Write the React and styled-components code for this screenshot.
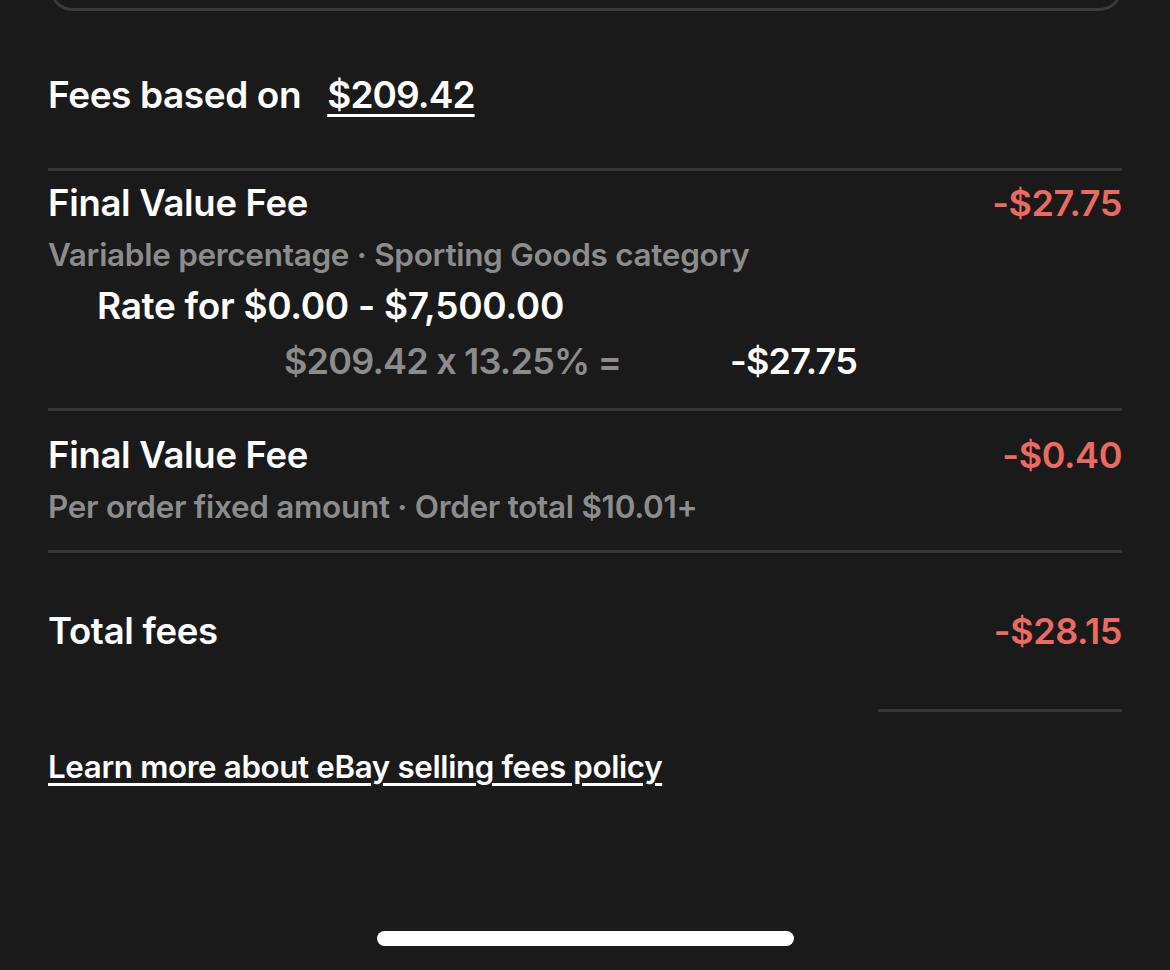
import React from 'react'
import styled, { createGlobalStyle } from 'styled-components'

const Global = createGlobalStyle`
  body {
    margin: 0;
    background: #1a1a1a;
    font-family: Inter, 'Noto Sans', sans-serif;
    color: #fff;
  }
`

const Screen = styled.div`
  width: 1170px;
  height: 970px;
  position: relative;
  overflow: hidden;
  background: #1a1a1a;
`

const CardEdge = styled.div`
  margin: -40px 48px 0 50px;
  height: 48px;
  border: 3px solid #3a3a3a;
  border-top: none;
  border-radius: 0 0 22px 22px;
`

const Content = styled.div`
  padding: 0 48px;
`

const BasedOn = styled.div`
  margin-top: 58px;
  margin-bottom: 49px;
  font-size: 37px;
  font-weight: 600;
  letter-spacing: -0.4px;
  display: flex;
  gap: 26px;
  height: 50px;
  align-items: center;
`

const Amount = styled.span`
  letter-spacing: -0.9px;
  text-decoration: underline;
  text-underline-offset: 6px;
  text-decoration-thickness: 3px;
`

const Divider = styled.div`
  height: 3px;
  background: #363636;
  margin-left: ${p => p.$left || 0}px;
`

const Section = styled.div`
  padding: ${p => p.$pad || '14px 0 30px'};
`

const Row = styled.div`
  display: flex;
  justify-content: space-between;
  align-items: center;
`

const Title = styled.div`
  font-size: 36.5px;
  font-weight: 600;
  letter-spacing: -0.3px;
  line-height: 50px;
`

const Fee = styled.div`
  font-size: 36px;
  font-weight: 600;
  color: #ec6a64;
  letter-spacing: -0.4px;
  line-height: 50px;
`

const Sub = styled.div`
  font-size: 31.5px;
  font-weight: 600;
  color: #8c8c8c;
  letter-spacing: -0.3px;
  line-height: 54px;
`

const Rate = styled.div`
  margin-left: 49px;
  font-size: 37px;
  font-weight: 600;
  letter-spacing: -0.3px;
  line-height: 48px;
`

const Calc = styled.div`
  display: flex;
  margin-left: 236px;
  line-height: 62px;
  font-size: 36px;
  font-weight: 600;
  letter-spacing: -0.8px;
`

const CalcExpr = styled.span`
  color: #8c8c8c;
  width: 446px;
`

const LinkText = styled.a`
  display: inline-block;
  margin-top: 35px;
  line-height: 40px;
  color: #fff;
  font-size: 31.3px;
  font-weight: 600;
  letter-spacing: -0.35px;
  text-decoration: underline;
  text-underline-offset: 5px;
  text-decoration-thickness: 3px;
`

const HomeBar = styled.div`
  position: absolute;
  left: 377px;
  top: 931px;
  width: 417px;
  height: 15px;
  border-radius: 8px;
  background: #fff;
`

const App = () => {
  return (
    <Screen>
      <Global />
      <CardEdge />
      <Content>
        <BasedOn>
          <span>Fees based on</span>
          <Amount>$209.42</Amount>
        </BasedOn>
        <Divider />
        <Section $pad='7px 0 16px'>
          <Row>
            <Title>Final Value Fee</Title>
            <Fee>-$27.75</Fee>
          </Row>
          <Sub>Variable percentage · Sporting Goods category</Sub>
          <Rate>Rate for $0.00 - $7,500.00</Rate>
          <Calc>
            <CalcExpr>$209.42 x 13.25% =</CalcExpr>
            <span>-$27.75</span>
          </Calc>
        </Section>
        <Divider />
        <Section $pad='19px 0 16px'>
          <Row>
            <Title>Final Value Fee</Title>
            <Fee>-$0.40</Fee>
          </Row>
          <Sub>Per order fixed amount · Order total $10.01+</Sub>
        </Section>
        <Divider />
        <Section $pad='53px 0 53px'>
          <Row>
            <Title>Total fees</Title>
            <Fee>-$28.15</Fee>
          </Row>
        </Section>
        <Divider $left={830} />
        <LinkText href='#'>Learn more about eBay selling fees policy</LinkText>
      </Content>
      <HomeBar />
    </Screen>
  )
}

export default App
